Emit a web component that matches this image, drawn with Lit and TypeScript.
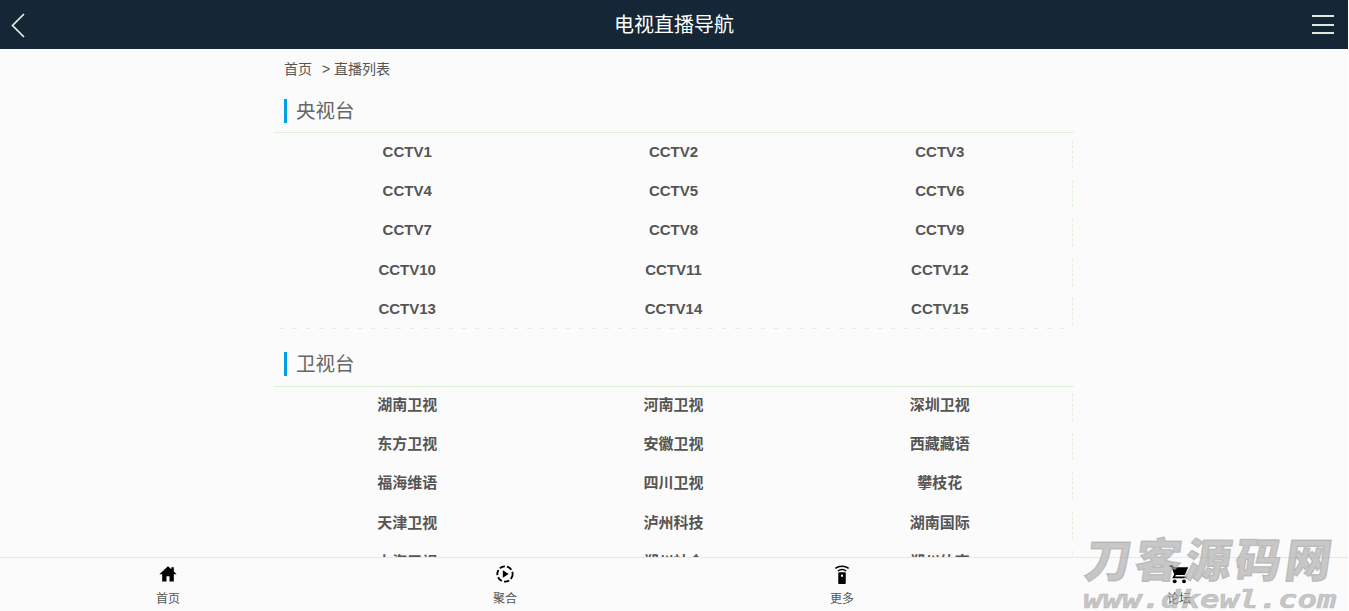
import { LitElement, html, css, svg } from "lit";
import { customElement } from "lit/decorators.js";

const CCTV = Array.from({ length: 15 }, (_, i) => `CCTV${i + 1}`);
const SAT = ["湖南卫视","河南卫视","深圳卫视","东方卫视","安徽卫视","西藏藏语","福海维语","四川卫视","攀枝花","天津卫视","泸州科技","湖南国际","上海卫视","郑州社会","郑州体育"];

const icons = {
  home: svg`<path d="M12 2.6 1.6 12.2H5V21h5.2v-6.2h3.6V21H19v-8.8h3.4L19 9.1V4h-3v2.4z" fill="#000"/>`,
  play: svg`<circle cx="12" cy="12" r="9.2" fill="none" stroke="#000" stroke-width="2.2" stroke-dasharray="6.5 2.6"/><path d="M9.4 7.4 16.4 12l-7 4.6z" fill="#000"/>`,
  remote: svg`<path d="M4 5.200C8.400 1.800 15.600 1.800 20 5.200M7 8.400c3-2.200 7-2.200 10 0" fill="none" stroke="#000" stroke-width="1.700"/><path fill-rule="evenodd" d="M8.500 10h7c.6 0 1 .4 1 1V23c0 .6-.4 1-1 1h-7c-.6 0-1-.4-1-1V11c0-.6.4-1 1-1zm3.500 2.600a1.400 1.400 0 1 0 0 2.800 1.400 1.400 0 0 0 0-2.800z" fill="#000"/>`,
  cart: svg`<path d="M.8 1.500h3.600l1.100 2.400H23l-4 9.200H8.300l-1 1.800H21v2.100H3.800l2.500-4.500L3 3.500H.8z" fill="#000"/><circle cx="6.800" cy="20.800" r="2.300" fill="#000"/><circle cx="18" cy="20.800" r="2.300" fill="#000"/>`,
};

@customElement("app-root")
export class AppRoot extends LitElement {
  static styles = css`
    :host { display: flex; flex-direction: column; height: 100vh; width: 1348px; overflow: hidden; position: relative;
      background: #fbfbfb; font-family: "Liberation Sans", "Noto Sans CJK SC", sans-serif; color: #555; }
    .top { flex: none; height: 49px; background: #152736; color: #fff; display: grid; grid-template-columns: 1fr auto 1fr; align-items: center; }
    .top h1 { margin: 0 0 2px; font-size: 20px; font-weight: 400; }
    .back { width: 14px; height: 25px; margin-left: 11px; margin-top: 1px; }
    .menu { justify-self: end; width: 22px; height: 19px; margin-right: 14px; display: flex; flex-direction: column; justify-content: space-between; }
    .menu i { display: block; height: 2px; background: #dfe6db; }
    main { flex: 1; min-height: 0; overflow: hidden; width: 800px; margin-left: 274px; }
    .crumb { font-size: 14px; line-height: 20px; padding: 10px 0 0 10px; color: #555; }
    .crumb .sep { margin-left: 10px; }
    .sec-title { height: 33px; margin-top: 20px; border-bottom: 1px solid #dff0d8; padding-left: 10px; }
    .sec-title h2 { margin: 0; height: 24px; line-height: 24px; font-size: 19.500px; font-weight: 400; border-left: 3px solid #00a0e9; padding-left: 9px; color: #666; }
    .grid { display: grid; grid-template-columns: repeat(3, 1fr); grid-auto-rows: 39.200px; width: 799px; height: 196px; }
    .cell { height: 27px; line-height: 21px; margin-top: 8px; text-align: center; font-size: 15px; font-weight: 700; color: #555; }
    .cell:nth-child(3n) { border-right: 1px dashed #dff0d8; padding-left: 1px; }
    .rule { height: 1px; margin: -1px 6px 0 6px; background: repeating-linear-gradient(90deg, #dff0d8 0 4px, transparent 4px 13px); }
    .sec-title.sec2 { margin-top: 23px; height: 34px; }
    .sec2 + .grid { margin-top: -1px; }
    footer { flex: none; height: 53px; border-top: 1px solid #dff0d8; background: #fbfbfb; display: grid; grid-template-columns: repeat(4, 337px); }
    .tab { display: flex; flex-direction: column; align-items: center; padding-right: 1px; }
    .tab svg { width: 20px; height: 20px; margin-top: 6px; display: block; }
    .tab span { font-size: 12px; line-height: 16px; margin-top: 7px; color: #555; }
    .mark { position: absolute; left: 1086px; top: 532px; width: 256px; pointer-events: none; color: rgba(165, 165, 165, .6); font-style: italic; }
    .mark .cn { font-family: "Noto Sans CJK SC", sans-serif; font-weight: 900; font-size: 46px; line-height: 50px; letter-spacing: 4px; white-space: nowrap; transform: skewX(-8deg); font-style: normal; -webkit-text-stroke: 1.200px rgba(165, 165, 165, .6); }
    .mark .en { font-family: "DejaVu Sans Mono", monospace; font-weight: 700; font-size: 24px; line-height: 24px; margin: 6px 0 0 -3px; white-space: nowrap; transform: scaleX(1.350); transform-origin: left center; -webkit-text-stroke: .5px rgba(165, 165, 165, .6); }
  `;

  private grid(items: string[]) {
    return html`<div class="grid">${items.map((t) => html`<div class="cell">${t}</div>`)}</div>`;
  }

  render() {
    const tabs: [string, unknown][] = [["首页", icons.home], ["聚合", icons.play], ["更多", icons.remote], ["论坛", icons.cart]];
    return html`
      <header class="top">
        <svg class="back" viewBox="0 0 14 25"><path d="M13 1 1.500 12.500 13 24" fill="none" stroke="#e9efe6" stroke-width="1.700"/></svg>
        <h1>电视直播导航</h1>
        <div class="menu"><i></i><i></i><i></i></div>
      </header>
      <main>
        <div class="crumb">首页<span class="sep">&gt; 直播列表</span></div>
        <div class="sec-title"><h2>央视台</h2></div>
        ${this.grid(CCTV)}
        <div class="rule"></div>
        <div class="sec-title sec2"><h2>卫视台</h2></div>
        ${this.grid(SAT)}
      </main>
      <footer>
        ${tabs.map(([label, icon]) => html`<div class="tab"><svg viewBox="0 0 24 24">${icon}</svg><span>${label}</span></div>`)}
      </footer>
      <div class="mark"><div class="cn">刀客源码网</div><div class="en">www.dkewl.com</div></div>
    `;
  }
}
